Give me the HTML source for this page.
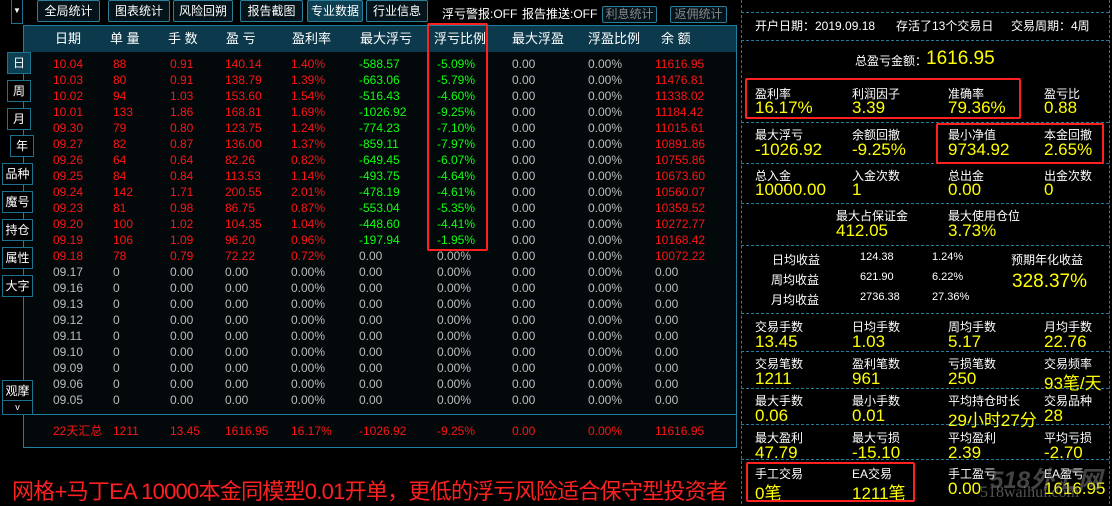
<!DOCTYPE html><html><head><meta charset="utf-8"><style>
*{margin:0;padding:0;box-sizing:border-box}
body{width:1112px;height:504px;background:#000;position:relative;overflow:hidden;font-family:"Liberation Sans","Noto Sans CJK SC",sans-serif;color:#fff}
.a{position:absolute;white-space:nowrap}
pre.a{white-space:pre;font-family:inherit;line-height:16px}
.btn{position:absolute;border:1px solid #2a7f9a;background:#04141a;color:#fff;font-size:12px;text-align:center;line-height:20px;border-radius:2px}
.sb{position:absolute;left:2px;width:31px;height:22px;border:1px solid #1f7190;background:#000;color:#fff;font-size:12px;text-align:center;line-height:20px;z-index:5}
.r{color:#ff1414}.g{color:#10ff10}.w{color:#bdbdbd}
.dl{position:absolute;left:741px;width:368px;border-top:1px dashed #1f7f9f}
.lb{position:absolute;font-size:12px;color:#fff;white-space:nowrap}
.v{position:absolute;font-size:17px;color:#ffff00;white-space:nowrap}
.box{position:absolute;border:2px solid #ff2020;border-radius:2px;z-index:6}
</style></head><body>
<div class="a" style="left:23px;top:25px;width:714px;height:423px;background:#03090b;border:1px solid #1f7f9f"></div>
<div class="a" style="left:24px;top:26px;width:712px;height:26px;background:#0c3a4c"></div>
<div class="a" style="left:24px;top:414px;width:712px;border-top:1px solid #1f7f9f"></div>
<div class="a" style="left:24px;top:26px;font-size:13px;line-height:26px;width:712px;height:26px">
<span class="a" style="left:31px">日期</span><span class="a" style="left:86px">单 量</span><span class="a" style="left:144px">手 数</span><span class="a" style="left:202px">盈 亏</span><span class="a" style="left:268px">盈利率</span><span class="a" style="left:336px">最大浮亏</span><span class="a" style="left:410px">浮亏比例</span><span class="a" style="left:488px">最大浮盈</span><span class="a" style="left:564px">浮盈比例</span><span class="a" style="left:637px">余 额</span></div>
<div class="sb" style="left:11px;top:-4px;height:28px;width:12px;font-size:8px;line-height:28px">▼</div>
<div class="btn" style="left:37px;top:0;width:63px">全局统计</div>
<div class="btn" style="left:108px;top:0;width:62px">图表统计</div>
<div class="btn" style="left:173px;top:0;width:60px">风险回朔</div>
<div class="btn" style="left:240px;top:0;width:63px">报告截图</div>
<div class="btn" style="left:307px;top:0;width:56px;background:#0d3f52">专业数据</div>
<div class="btn" style="left:366px;top:0;width:62px">行业信息</div>
<div class="a" style="left:442px;top:5px;font-size:12px">浮亏警报:OFF</div>
<div class="a" style="left:522px;top:5px;font-size:12px">报告推送:OFF</div>
<div class="btn" style="left:602px;top:6px;width:55px;height:17px;line-height:15px;color:#888">利息统计</div>
<div class="btn" style="left:670px;top:6px;width:57px;height:17px;line-height:15px;color:#888">返佣统计</div>
<div class="sb" style="top:52px;left:7px;width:24px;background:#0d3f52">日</div>
<div class="sb" style="top:80px;left:7px;width:24px">周</div>
<div class="sb" style="top:108px;left:7px;width:24px">月</div>
<div class="sb" style="top:135px;left:10px;width:24px">年</div>
<div class="sb" style="top:163px">品种</div>
<div class="sb" style="top:191px">魔号</div>
<div class="sb" style="top:219px">持仓</div>
<div class="sb" style="top:247px">属性</div>
<div class="sb" style="top:275px">大字</div>
<div class="sb" style="top:380px;height:21px">观摩</div>
<div class="sb" style="top:400px;height:15px;line-height:12px;font-size:9px">v</div>
<div class="a" style="left:53px;top:56px;font-size:12px;line-height:16px">
<pre class="a r" style="left:0;top:0">10.04
10.03
10.02
10.01
09.30
09.27
09.26
09.25
09.24
09.23
09.20
09.19
09.18</pre>
<pre class="a w" style="left:0;top:208px">09.17
09.16
09.13
09.12
09.11
09.10
09.09
09.06
09.05</pre>
<pre class="a r" style="left:60px;top:0">88
80
94
133
79
82
64
84
142
81
100
106
78</pre>
<pre class="a r" style="left:117px;top:0">0.91
0.91
1.03
1.86
0.80
0.87
0.64
0.84
1.71
0.98
1.02
1.09
0.79</pre>
<pre class="a r" style="left:172px;top:0">140.14
138.79
153.60
168.81
123.75
136.00
82.26
113.53
200.55
86.75
104.35
96.20
72.22</pre>
<pre class="a r" style="left:238px;top:0">1.40%
1.39%
1.54%
1.69%
1.24%
1.37%
0.82%
1.14%
2.01%
0.87%
1.04%
0.96%
0.72%</pre>
<pre class="a g" style="left:306px;top:0">-588.57
-663.06
-516.43
-1026.92
-774.23
-859.11
-649.45
-493.75
-478.19
-553.04
-448.60
-197.94</pre>
<pre class="a g" style="left:384px;top:0">-5.09%
-5.79%
-4.60%
-9.25%
-7.10%
-7.97%
-6.07%
-4.64%
-4.61%
-5.35%
-4.41%
-1.95%</pre>
<pre class="a w" style="left:306px;top:192px">0.00
0.00
0.00
0.00
0.00
0.00
0.00
0.00
0.00
0.00</pre>
<pre class="a w" style="left:384px;top:192px">0.00%
0.00%
0.00%
0.00%
0.00%
0.00%
0.00%
0.00%
0.00%
0.00%</pre>
<pre class="a w" style="left:60px;top:208px">0
0
0
0
0
0
0
0
0</pre>
<pre class="a w" style="left:117px;top:208px">0.00
0.00
0.00
0.00
0.00
0.00
0.00
0.00
0.00</pre>
<pre class="a w" style="left:172px;top:208px">0.00
0.00
0.00
0.00
0.00
0.00
0.00
0.00
0.00</pre>
<pre class="a w" style="left:238px;top:208px">0.00%
0.00%
0.00%
0.00%
0.00%
0.00%
0.00%
0.00%
0.00%</pre>
<pre class="a w" style="left:459px;top:0">0.00
0.00
0.00
0.00
0.00
0.00
0.00
0.00
0.00
0.00
0.00
0.00
0.00
0.00
0.00
0.00
0.00
0.00
0.00
0.00
0.00
0.00</pre>
<pre class="a w" style="left:535px;top:0">0.00%
0.00%
0.00%
0.00%
0.00%
0.00%
0.00%
0.00%
0.00%
0.00%
0.00%
0.00%
0.00%
0.00%
0.00%
0.00%
0.00%
0.00%
0.00%
0.00%
0.00%
0.00%</pre>
<pre class="a r" style="left:602px;top:0">11616.95
11476.81
11338.02
11184.42
11015.61
10891.86
10755.86
10673.60
10560.07
10359.52
10272.77
10168.42
10072.22</pre>
<pre class="a w" style="left:602px;top:208px">0.00
0.00
0.00
0.00
0.00
0.00
0.00
0.00
0.00</pre>
</div>
<div class="a r" style="left:0;top:423px;font-size:12px;line-height:16px;width:737px">
<span class="a" style="left:53px">22天汇总</span><span class="a" style="left:113px">1211</span><span class="a" style="left:170px">13.45</span><span class="a" style="left:225px">1616.95</span><span class="a" style="left:291px">16.17%</span><span class="a" style="left:359px">-1026.92</span><span class="a" style="left:437px">-9.25%</span><span class="a" style="left:512px">0.00</span><span class="a" style="left:588px">0.00%</span><span class="a" style="left:655px">11616.95</span></div>
<div class="box" style="left:427px;top:23px;width:61px;height:228px"></div>
<div class="a" style="left:12px;top:474px;font-size:22px;color:#ff2020;letter-spacing:-0.75px">网格+马丁EA 10000本金同模型0.01开单，更低的浮亏风险适合保守型投资者</div>
<div class="a" style="left:741px;top:0;height:504px;border-left:1px dashed #1f7f9f"></div>
<div class="a" style="left:1109px;top:0;height:504px;border-left:1px dashed #1f7f9f"></div>
<div class="dl" style="top:12px"></div><div class="dl" style="top:40px"></div><div class="dl" style="top:122px"></div><div class="dl" style="top:163px"></div><div class="dl" style="top:203px"></div><div class="dl" style="top:245px"></div><div class="dl" style="top:313px"></div><div class="dl" style="top:351px"></div><div class="dl" style="top:388px"></div><div class="dl" style="top:424px"></div><div class="dl" style="top:459px"></div>
<div class="lb" style="left:755px;top:17px">开户日期：2019.09.18</div>
<div class="lb" style="left:896px;top:17px">存活了13个交易日</div>
<div class="lb" style="left:1011px;top:17px">交易周期：4周</div>
<div class="lb" style="left:855px;top:52px">总盈亏金额：</div>
<div class="v" style="left:926px;top:48px;font-size:19px">1616.95</div>
<div class="lb" style="left:755px;top:85px">盈利率</div><div class="v" style="left:755px;top:98px">16.17%</div>
<div class="lb" style="left:852px;top:85px">利润因子</div><div class="v" style="left:852px;top:98px">3.39</div>
<div class="lb" style="left:948px;top:85px">准确率</div><div class="v" style="left:948px;top:98px">79.36%</div>
<div class="lb" style="left:1044px;top:85px">盈亏比</div><div class="v" style="left:1044px;top:98px">0.88</div>
<div class="box" style="left:745px;top:78px;width:276px;height:41px"></div>
<div class="lb" style="left:755px;top:126px">最大浮亏</div><div class="v" style="left:755px;top:140px">-1026.92</div>
<div class="lb" style="left:852px;top:126px">余额回撤</div><div class="v" style="left:852px;top:140px">-9.25%</div>
<div class="lb" style="left:948px;top:126px">最小净值</div><div class="v" style="left:948px;top:140px">9734.92</div>
<div class="lb" style="left:1044px;top:126px">本金回撤</div><div class="v" style="left:1044px;top:140px">2.65%</div>
<div class="box" style="left:936px;top:123px;width:168px;height:41px"></div>
<div class="lb" style="left:755px;top:167px">总入金</div><div class="v" style="left:755px;top:180px">10000.00</div>
<div class="lb" style="left:852px;top:167px">入金次数</div><div class="v" style="left:852px;top:180px">1</div>
<div class="lb" style="left:948px;top:167px">总出金</div><div class="v" style="left:948px;top:180px">0.00</div>
<div class="lb" style="left:1044px;top:167px">出金次数</div><div class="v" style="left:1044px;top:180px">0</div>
<div class="lb" style="left:836px;top:207px">最大占保证金</div><div class="v" style="left:836px;top:221px">412.05</div>
<div class="lb" style="left:948px;top:207px">最大使用仓位</div><div class="v" style="left:948px;top:221px">3.73%</div>
<div class="lb" style="left:772px;top:251px">日均收益</div><div class="lb" style="left:860px;top:251px;font-size:11px">124.38</div><div class="lb" style="left:932px;top:251px;font-size:11px">1.24%</div>
<div class="lb" style="left:771px;top:271px">周均收益</div><div class="lb" style="left:860px;top:271px;font-size:11px">621.90</div><div class="lb" style="left:932px;top:271px;font-size:11px">6.22%</div>
<div class="lb" style="left:771px;top:291px">月均收益</div><div class="lb" style="left:860px;top:291px;font-size:11px">2736.38</div><div class="lb" style="left:932px;top:291px;font-size:11px">27.36%</div>
<div class="lb" style="left:1011px;top:251px">预期年化收益</div><div class="v" style="left:1012px;top:271px;font-size:19px">328.37%</div>
<div class="lb" style="left:755px;top:318px">交易手数</div><div class="v" style="left:755px;top:332px">13.45</div>
<div class="lb" style="left:852px;top:318px">日均手数</div><div class="v" style="left:852px;top:332px">1.03</div>
<div class="lb" style="left:948px;top:318px">周均手数</div><div class="v" style="left:948px;top:332px">5.17</div>
<div class="lb" style="left:1044px;top:318px">月均手数</div><div class="v" style="left:1044px;top:332px">22.76</div>
<div class="lb" style="left:755px;top:355px">交易笔数</div><div class="v" style="left:755px;top:369px">1211</div>
<div class="lb" style="left:852px;top:355px">盈利笔数</div><div class="v" style="left:852px;top:369px">961</div>
<div class="lb" style="left:948px;top:355px">亏损笔数</div><div class="v" style="left:948px;top:369px">250</div>
<div class="lb" style="left:1044px;top:355px">交易频率</div><div class="v" style="left:1044px;top:369px">93笔/天</div>
<div class="lb" style="left:755px;top:392px">最大手数</div><div class="v" style="left:755px;top:406px">0.06</div>
<div class="lb" style="left:852px;top:392px">最小手数</div><div class="v" style="left:852px;top:406px">0.01</div>
<div class="lb" style="left:948px;top:392px">平均持仓时长</div><div class="v" style="left:948px;top:406px">29小时27分</div>
<div class="lb" style="left:1044px;top:392px">交易品种</div><div class="v" style="left:1044px;top:406px">28</div>
<div class="lb" style="left:755px;top:429px">最大盈利</div><div class="v" style="left:755px;top:443px">47.79</div>
<div class="lb" style="left:852px;top:429px">最大亏损</div><div class="v" style="left:852px;top:443px">-15.10</div>
<div class="lb" style="left:948px;top:429px">平均盈利</div><div class="v" style="left:948px;top:443px">2.39</div>
<div class="lb" style="left:1044px;top:429px">平均亏损</div><div class="v" style="left:1044px;top:443px">-2.70</div>
<div class="lb" style="left:755px;top:465px">手工交易</div><div class="v" style="left:755px;top:479px">0笔</div>
<div class="lb" style="left:852px;top:465px">EA交易</div><div class="v" style="left:852px;top:479px">1211笔</div>
<div class="lb" style="left:948px;top:465px">手工盈亏</div><div class="v" style="left:948px;top:479px">0.00</div>
<div class="lb" style="left:1044px;top:465px">EA盈亏</div><div class="v" style="left:1044px;top:479px">1616.95</div>
<div class="box" style="left:746px;top:462px;width:169px;height:40px"></div>
<div class="a" style="left:990px;top:460px;font-size:24px;font-style:italic;font-weight:bold;color:rgba(150,150,150,0.45)">518外汇网</div>
<div class="a" style="left:980px;top:484px;font-size:16px;font-family:'Liberation Serif',serif;color:rgba(170,170,170,0.5)">518waihui.com</div>
</body></html>
